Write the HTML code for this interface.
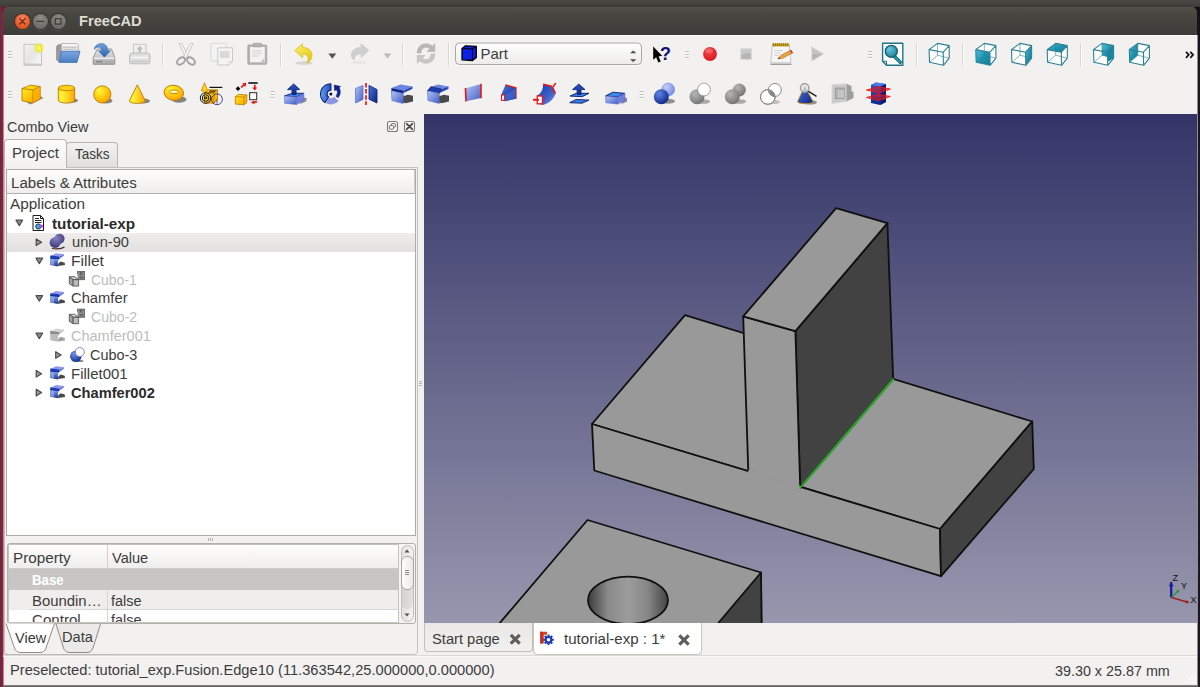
<!DOCTYPE html>
<html>
<head>
<meta charset="utf-8">
<title>FreeCAD</title>
<style>
html,body{margin:0;padding:0;}
body{width:1200px;height:687px;overflow:hidden;position:relative;background:#3c3b37;font-family:"Liberation Sans","DejaVu Sans",sans-serif;font-size:15px;color:#3c3c3c;}
.abs{position:absolute;}
#topband{left:0;top:0;width:1200px;height:8px;background:linear-gradient(#494843 0,#43423d 50%,#383733 100%);}
#leftstrip{left:0;top:7px;width:4px;height:680px;background:linear-gradient(90deg,#5e2a49 0,#6d2f4b 2.200px,#a8182c 2.400px,#a8182c 3.300px,#d8b4ba 3.600px,#e8dcdc 4px);}
#rightstrip{left:1197px;top:7px;width:3px;height:680px;background:linear-gradient(#121212 0,#15141a 30px,#1d1424 60px,#1d1424 100%);}
#titlebar{left:3px;top:7px;width:1194px;height:28px;background:linear-gradient(#55544e 0,#4d4c47 2px,#474641 30%,#3d3c38 100%);border-radius:5px 5px 0 0;}
#title{left:79px;top:12px;font-weight:bold;font-size:15px;color:#dfdbd2;letter-spacing:-0.25px;white-space:nowrap;}
.wbtn{width:15px;height:15px;border-radius:50%;top:14px;box-shadow:0 0 0 1px rgba(45,44,40,.8),0 1px 0 1px rgba(255,255,255,.08);}
#win{left:4px;top:35px;width:1193px;height:650px;background:#f2f1f0;box-shadow:inset 0 1px 0 #fff;}
#viewport{left:424px;top:114px;width:773px;height:509px;background:linear-gradient(#343468 0,#9797ae 100%);overflow:hidden;}
.t{position:absolute;white-space:nowrap;line-height:16px;font-size:14px;transform-origin:0 0;}
</style>
</head>
<body>
<div id="topband" class="abs"></div>
<div id="leftstrip" class="abs"></div>
<div id="rightstrip" class="abs"></div>
<div class="abs" style="left:2px;top:7px;width:7px;height:6px;background:#8a0f14;"></div>
<div class="abs" style="left:1190px;top:7px;width:7px;height:6px;background:#0c0c0c;"></div>
<div id="titlebar" class="abs"></div>
<div class="abs wbtn" style="left:15px;background:radial-gradient(circle at 50% 30%,#f28460,#e8541f 70%);"></div>
<div class="abs wbtn" style="left:33px;background:radial-gradient(circle at 50% 30%,#8c8b85,#6d6c66 70%);"></div>
<div class="abs wbtn" style="left:51px;background:radial-gradient(circle at 50% 30%,#8c8b85,#6d6c66 70%);"></div>
<svg class="abs" style="left:12px;top:11px" width="60" height="21" viewBox="12 11 60 21">
 <path d="M19.800 18.800 L25 24 M25 18.800 L19.800 24" stroke="#5a1f0a" stroke-width="1.300" stroke-linecap="round" opacity=".85"/>
 <path d="M37 21.400 H43.400" stroke="#3a3935" stroke-width="1.300" stroke-linecap="round"/>
 <rect x="55.300" y="18.700" width="5.600" height="5.400" fill="none" stroke="#3a3935" stroke-width="1.200"/>
</svg>
<div id="win" class="abs"></div>
<!--TOOLBARS-->
<svg class="abs" style="left:0;top:35px" width="1200" height="79" viewBox="0 35 1200 79">
<defs>
 <linearGradient id="gPage" x1="0" y1="0" x2="1" y2="1"><stop offset="0" stop-color="#f4f4f4"/><stop offset=".5" stop-color="#e4e4e4"/><stop offset="1" stop-color="#fafafa"/></linearGradient>
 <linearGradient id="gFolder" x1="0" y1="0" x2="0" y2="1"><stop offset="0" stop-color="#7da7df"/><stop offset="1" stop-color="#4a7fc4"/></linearGradient>
 <linearGradient id="gDrive" x1="0" y1="0" x2="0" y2="1"><stop offset="0" stop-color="#e9e9e9"/><stop offset="1" stop-color="#a9a9a9"/></linearGradient>
 <linearGradient id="gArrB" x1="0" y1="0" x2="0" y2="1"><stop offset="0" stop-color="#6ea0dc"/><stop offset="1" stop-color="#2b62ac"/></linearGradient>
 <linearGradient id="gUndo" x1="0" y1="0" x2="1" y2="1"><stop offset="0" stop-color="#f9ef6a"/><stop offset="1" stop-color="#e3c50f"/></linearGradient>
 <radialGradient id="gGlow"><stop offset="0" stop-color="#fffbd0"/><stop offset=".35" stop-color="#f7ee3a"/><stop offset=".8" stop-color="#f2e634" stop-opacity=".75"/><stop offset="1" stop-color="#f2e634" stop-opacity="0"/></radialGradient>
 <radialGradient id="gRed" cx=".4" cy=".3" r=".8"><stop offset="0" stop-color="#f4484c"/><stop offset="1" stop-color="#d8101a"/></radialGradient>
 <linearGradient id="gTeal" x1="0" y1="0" x2="1" y2="1"><stop offset="0" stop-color="#55c2dc"/><stop offset=".5" stop-color="#1f93ae"/><stop offset="1" stop-color="#157c96"/></linearGradient>
 <radialGradient id="gTealB" cx=".35" cy=".3" r=".8"><stop offset="0" stop-color="#6fc6dc"/><stop offset="1" stop-color="#137b94"/></radialGradient>
 <linearGradient id="gCombo" x1="0" y1="0" x2="0" y2="1"><stop offset="0" stop-color="#ffffff"/><stop offset="1" stop-color="#ecebea"/></linearGradient>
 <g id="grip"><path d="M0 .5 H4 M0 3.500 H4 M0 6.500 H4" stroke="#c3c1be" stroke-width="1"/><path d="M0 1.500 H4 M0 4.500 H4 M0 7.500 H4" stroke="#fbfbfa" stroke-width="1"/></g>
 <g id="vsep"><path d="M.5 0 V23" stroke="#d9d7d3"/><path d="M1.500 0 V23" stroke="#fbfbfa"/></g>
 <g id="cubeW">
  <path d="M0.5 6.6 L9 0.4 L20.6 2.6 L20.6 15.2 L14.8 22.3 L0.9 19.3Z" fill="#fff"/>
 </g>
 <g id="cubeL" fill="none" stroke="#2d8093" stroke-linejoin="round">
  <path d="M9 0.4 L9 12.2 M9 12.2 L0.9 19.3 M9 12.2 L20.6 15.2" stroke-width=".8" opacity=".75"/>
  <path d="M0.5 6.6 L9 0.4 L20.6 2.6 L14.6 9.2Z M0.5 6.6 L0.9 19.3 L14.8 22.3 L14.6 9.2 M14.8 22.3 L20.6 15.2 L20.6 2.6" stroke-width="1.100"/>
 </g>
</defs>
<!-- row 1 -->
<use href="#grip" x="8" y="51"/>
<!-- new -->
<path d="M23.500 65 H42" stroke="#b8b8b8" stroke-width="1.200"/>
<rect x="24" y="44.300" width="17.500" height="19.800" fill="url(#gPage)" stroke="#c4c4c4" stroke-width="1"/>
<circle cx="39" cy="48" r="5.200" fill="url(#gGlow)"/>
<!-- open -->
<path d="M56.600 46.500 L58 44.800 H61.500 V61.500 H58.500 L56.600 60Z" fill="#9a9a9a" stroke="#858585" stroke-width=".7"/>
<path d="M61.300 43.600 H77.300 L78.300 44.600 V52 H61.300Z" fill="#e9e9e9" stroke="#a9a9a9" stroke-width=".8"/>
<path d="M62.500 45 H77" stroke="#fff" stroke-width="1.200"/>
<path d="M63 47.200 H76.500 M63 49.300 H76.500" stroke="#bdbdbd" stroke-width="1"/>
<path d="M59.100 62.400 L61.300 51.300 H80 L76.900 62.400Z" fill="url(#gFolder)" stroke="#4676b8" stroke-width=".9" stroke-linejoin="round"/>
<!-- save -->
<path d="M93.200 57.600 L97.300 49 H111.500 L114.800 57.600 V64.300 H93.200Z" fill="url(#gDrive)" stroke="#8d8d8d" stroke-width=".9" stroke-linejoin="round"/>
<path d="M93.800 58.200 H114.300" stroke="#f8f8f8" stroke-width="1.200"/>
<path d="M96 61.600 H102.500" stroke="#808080" stroke-width="1.300"/><path d="M105 61.600 H112.500" stroke="#a5a5a5" stroke-width="1.300" stroke-dasharray="1.300 .9"/>
<path d="M94.300 49.600 C94.300 45.500 98.500 43.200 102 43.500 C106 43.900 107.800 46.800 107.800 50.800 H110.600 L104.400 57.200 L98.300 50.800 H101.600 C101.600 48.500 100.300 47 98.300 47.200 C96.300 47.400 95 48.200 94.300 49.600Z" fill="url(#gArrB)" stroke="#3a6aa8" stroke-width=".5"/>
<!-- print (disabled) -->
<rect x="133.500" y="44.300" width="12.500" height="9" fill="#efefef" stroke="#c2c2c2" stroke-width=".9"/>
<path d="M139.800 46 L142.800 49.300 H141 V52 H138.600 V49.300 H136.800Z" fill="#b9b9b9"/>
<path d="M129.500 56 Q129.500 53 132.500 53 H147 Q150 53 150 56 V62.500 Q150 63.800 148.500 63.800 H131 Q129.500 63.800 129.500 62.500Z" fill="#dedede" stroke="#b7b7b7" stroke-width=".9"/>
<path d="M131.500 57.500 H148" stroke="#f8f8f8" stroke-width="1.500"/>
<path d="M131 61.500 H148.500" stroke="#c6c6c6" stroke-width="1.400"/>
<use href="#vsep" x="162" y="43"/>
<!-- cut (disabled) -->
<path d="M179 43.500 L181.800 43.500 L188.500 57 L186 58.500Z" fill="#f7f7f7" stroke="#bdbdbd" stroke-width=".8"/>
<path d="M193 43.500 L190.200 43.500 L183.500 57 L186 58.500Z" fill="#f7f7f7" stroke="#bdbdbd" stroke-width=".8"/>
<ellipse cx="181" cy="61" rx="4.500" ry="3" transform="rotate(-40 181 61)" fill="none" stroke="#a3a3a3" stroke-width="2"/>
<ellipse cx="191" cy="61" rx="4.500" ry="3" transform="rotate(40 191 61)" fill="none" stroke="#a3a3a3" stroke-width="2"/>
<!-- copy (disabled) -->
<rect x="210.800" y="43.400" width="15.500" height="17.500" rx="1" fill="#f3f3f3" stroke="#d6d6d6" stroke-width=".9"/>
<path d="M217.800 47.800 H232.500 V61.500 L228.800 65 H217.800Z" fill="#f4f4f4" stroke="#c4c4c4" stroke-width=".9" stroke-linejoin="round"/>
<rect x="220" y="51" width="9.500" height="7" fill="#d9d9d9"/>
<path d="M228.800 65 V61.500 H232.500Z" fill="#fff" stroke="#c4c4c4" stroke-width=".7"/>
<!-- paste (disabled) -->
<rect x="247.800" y="45" width="19" height="19.300" rx="1" fill="#b1b1b1" stroke="#a6a6a6" stroke-width=".8"/>
<path d="M250 46.800 H264.800 V62.300 H250Z" fill="#f2f2f2"/>
<path d="M252 51 H262 M252 53.500 H262 M252 56 H259" stroke="#dcdcdc" stroke-width="1.300"/>
<path d="M260.800 61.800 L264.300 58.300 V61.800Z" fill="#bdbdbd"/>
<rect x="253" y="43.300" width="8.600" height="3.600" rx="1" fill="#b3b3b3" stroke="#999" stroke-width=".6"/>
<use href="#vsep" x="280" y="43"/>
<!-- undo -->
<ellipse cx="304" cy="63" rx="8.500" ry="1.800" fill="#000" opacity=".12"/>
<path d="M294.800 50.500 L302.500 43.800 V47.600 C309 47.400 312.300 51.500 312 56 C311.700 59.800 309.500 62 306.500 63 C308.500 60.500 308.800 57.500 307 55.600 C305.800 54.300 304.200 54 302.500 54.100 V57.800Z" fill="url(#gUndo)" stroke="#d9b90a" stroke-width=".7" stroke-linejoin="round"/>
<path d="M328.300 53.500 H336.300 L332.300 58.700Z" fill="#555"/>
<!-- redo disabled -->
<ellipse cx="359" cy="62.500" rx="8" ry="1.500" fill="#000" opacity=".05"/>
<path d="M368.700 50.300 L361.200 43.800 V47.500 C355 47.300 351.300 51 351.500 55.500 C351.700 58.300 353 59.500 354.500 60 C354 57.500 355.500 55.300 357.500 54.500 C358.700 54 360 54 361.200 54.100 V57.500Z" fill="#cfcfcf" stroke="#c5c5c5" stroke-width=".6" stroke-linejoin="round"/>
<path d="M383.700 53.500 H391.300 L387.500 58.500Z" fill="#b9b9b9"/>
<use href="#vsep" x="402" y="43"/>
<!-- refresh disabled -->
<path d="M417.300 53 C417.300 47 421.500 43.800 426 43.800 C428.800 43.800 430.800 44.800 432.300 46.300 L434.800 43.800 V51.500 H427 L429.800 48.800 C428.800 47.800 427.500 47.300 426 47.300 C423 47.300 421 49.800 421 53Z" fill="#b9b9b9" stroke="#a8a8a8" stroke-width=".5"/>
<path d="M434.800 54 C434.800 60 430.500 63.200 426 63.200 C423.200 63.200 421.200 62.200 419.700 60.700 L417.300 63.200 V55.500 H425 L422.300 58.200 C423.300 59.200 424.500 59.700 426 59.700 C429 59.700 431 57.200 431 54Z" fill="#c6c6c6" stroke="#b0b0b0" stroke-width=".5"/>
<use href="#vsep" x="448" y="43"/>
<!-- combo -->
<rect x="455.500" y="43" width="186" height="21.500" rx="4" fill="url(#gCombo)" stroke="#aaa7a2" stroke-width="1"/>
<path d="M455.500 65.500 H641" stroke="#fff" stroke-width="1" opacity=".7"/>
<path d="M462 48.500 L465.500 45.800 L476.300 46.300 L476.300 57.500 L472.500 60.500 L462 59.800Z" fill="#0b22e6" stroke="#000" stroke-width="1.300" stroke-linejoin="round"/>
<path d="M462 48.500 L472.500 49 L476.300 46.300 M472.500 49 V60.500" fill="none" stroke="#000" stroke-width="1.100"/>
<text x="480.500" y="59.300" font-family="Liberation Sans, sans-serif" font-size="15" fill="#3c3c3c">Part</text>
<path d="M630 53.300 L633.200 50.500 L636.400 53.300Z M630 59.300 L633.200 62 L636.400 59.300Z" fill="#4d4d4d"/>
<!-- whats this -->
<path d="M653.200 46.500 L653.200 59.800 L656.200 57.300 L658.300 62.500 L660.800 61.500 L658.600 56.300 L662.300 56Z" fill="#000"/>
<text x="660" y="59.500" font-family="Liberation Sans, sans-serif" font-weight="bold" font-size="18" fill="#10107c">?</text>
<use href="#grip" x="685" y="51"/>
<!-- record -->
<circle cx="710" cy="54" r="6.900" fill="url(#gRed)"/>
<ellipse cx="709" cy="50.800" rx="4" ry="2.300" fill="#fff" opacity=".18"/>
<!-- stop disabled -->
<rect x="740.800" y="48.800" width="10.500" height="10.500" fill="#c9c9c9" stroke="#d6d6d6" stroke-width=".8"/>
<path d="M741.500 55 Q746 52.500 750.700 53 V58.800 H741.500Z" fill="#b5b5b5"/>
<!-- macros notepad -->
<path d="M770.500 64.300 H791.500" stroke="#9c9c9c" stroke-width="1.400"/>
<path d="M772.300 45.500 H789.300 L791 62.800 H770.800Z" fill="#f6f6f6" stroke="#b9b9b9" stroke-width=".8"/>
<path d="M774 50.500 H783 M774 53 H781 M774 55.500 H779" stroke="#d0d0d0" stroke-width=".9"/>
<rect x="772.300" y="43.300" width="17" height="3.200" fill="#c9a227"/>
<path d="M773.500 43.300 V46 M775.500 43.300 V46 M777.500 43.300 V46 M779.500 43.300 V46 M781.500 43.300 V46 M783.500 43.300 V46 M785.500 43.300 V46 M787.500 43.300 V46" stroke="#8d6f10" stroke-width=".8"/>
<path d="M777.800 58.800 L781 55.300 L791 50 L792.800 52.800 L782.500 58.300Z" fill="#e8a33a" stroke="#a8691c" stroke-width=".6"/>
<path d="M790 50.500 L791 50 L792.800 52.800 L791.800 53.400Z" fill="#e0202a"/>
<path d="M777.800 58.800 L779.300 57.200 L780 58.500Z" fill="#222"/>
<!-- play disabled -->
<path d="M811.800 47 L823.500 54 L811.800 61Z" fill="#c4c4c4" stroke="#d4d4d4" stroke-width=".8" stroke-linejoin="round"/>
<path d="M812.500 54 L822.500 54 L812.500 60Z" fill="#b5b5b5"/>
<use href="#grip" x="868" y="51"/>
<!-- zoom fit -->
<path d="M882.600 43.300 H902.800 V65.200 H886.500 L882.600 61.200Z" fill="#fff" stroke="#1f7485" stroke-width="1.400" stroke-linejoin="round"/>
<path d="M882.600 61.200 H886.500 V65.200" fill="none" stroke="#1f7485" stroke-width="1"/>
<path d="M894.500 56.500 L900.300 62.300" stroke="#0f6075" stroke-width="3.400" stroke-linecap="round"/>
<path d="M894.500 56.500 L900.300 62.300" stroke="#2ca0ba" stroke-width="1.600" stroke-linecap="round"/>
<circle cx="891.300" cy="51.300" r="6" fill="url(#gTealB)" stroke="#0f6075" stroke-width="1.300"/>
<use href="#vsep" x="916" y="43"/>
<!-- iso -->
<g transform="translate(928.600 43)"><use href="#cubeW"/><use href="#cubeL"/></g>
<use href="#vsep" x="962" y="43"/>
<!-- front -->
<g transform="translate(975.300 43)"><use href="#cubeW"/><path d="M0.5 6.6 L14.6 9.2 L14.8 22.3 L0.9 19.3Z" fill="url(#gTeal)"/><use href="#cubeL"/></g>
<!-- right -->
<g transform="translate(1011 43)"><use href="#cubeW"/><path d="M14.6 9.2 L20.6 2.6 L20.6 15.2 L14.8 22.3Z" fill="url(#gTeal)"/><use href="#cubeL"/></g>
<!-- top -->
<g transform="translate(1046.700 43)"><use href="#cubeW"/><path d="M0.5 6.6 L9 0.4 L20.6 2.6 L14.6 9.2Z" fill="url(#gTeal)"/><use href="#cubeL"/></g>
<use href="#vsep" x="1080" y="43"/>
<!-- rear -->
<g transform="translate(1093 43)"><use href="#cubeW"/><path d="M9 0.4 L20.6 2.6 L20.6 15.2 L9 12.2Z" fill="url(#gTeal)"/><path d="M14.6 9.2 L20.6 2.6 L20.6 15.2 L14.6 19Z" fill="#1a87a2"/><use href="#cubeL"/></g>
<!-- left -->
<g transform="translate(1128.800 43)"><use href="#cubeW"/><path d="M0.5 6.6 L9 0.4 L9 12.2 L0.9 19.3Z" fill="url(#gTeal)"/><use href="#cubeL"/></g>
<!-- chevrons -->
<path d="M1186 51.800 L1188.800 54.800 L1186 57.800 M1190.300 51.800 L1193.100 54.800 L1190.300 57.800" fill="none" stroke="#111" stroke-width="1.700"/>
<defs>
 <linearGradient id="gY" x1="0" y1="0" x2="1" y2="1"><stop offset="0" stop-color="#fff02a"/><stop offset=".5" stop-color="#ffc60a"/><stop offset="1" stop-color="#ffa200"/></linearGradient>
 <linearGradient id="gYh" x1="0" y1="0" x2="1" y2="0"><stop offset="0" stop-color="#ffe81e"/><stop offset=".25" stop-color="#fff23a"/><stop offset="1" stop-color="#ffa400"/></linearGradient>
 <radialGradient id="gYs" cx=".35" cy=".3" r=".75"><stop offset="0" stop-color="#fff63a"/><stop offset=".6" stop-color="#ffc40a"/><stop offset="1" stop-color="#ffa000"/></radialGradient>
 <linearGradient id="gB1" x1="0" y1="0" x2="1" y2="1"><stop offset="0" stop-color="#b7c6f4"/><stop offset="1" stop-color="#3f5fc8"/></linearGradient>
 <linearGradient id="gB2" x1="0" y1="0" x2="1" y2="1"><stop offset="0" stop-color="#4f74da"/><stop offset="1" stop-color="#0a2385"/></linearGradient>
 <linearGradient id="gB3" x1="0" y1="0" x2="0" y2="1"><stop offset="0" stop-color="#2f57c8"/><stop offset="1" stop-color="#0b2a8e"/></linearGradient>
 <linearGradient id="gRev" x1="0" y1="0" x2="1" y2="0"><stop offset="0" stop-color="#62a0f2"/><stop offset="1" stop-color="#2348c0"/></linearGradient>
 <linearGradient id="gSw" x1="0" y1="0" x2="1" y2="1"><stop offset="0" stop-color="#1a3aa8"/><stop offset=".6" stop-color="#3a62cc"/><stop offset="1" stop-color="#7aa0ec"/></linearGradient>
 <radialGradient id="gBs" cx=".35" cy=".3" r=".8"><stop offset="0" stop-color="#5f86ea"/><stop offset="1" stop-color="#061f80"/></radialGradient>
 <radialGradient id="gBsL" cx=".35" cy=".3" r=".8"><stop offset="0" stop-color="#c3cdf6"/><stop offset="1" stop-color="#6f86e0"/></radialGradient>
 <radialGradient id="gGs" cx=".35" cy=".3" r=".8"><stop offset="0" stop-color="#b5b5b5"/><stop offset="1" stop-color="#6e6e6e"/></radialGradient>
 <g id="filletBig">
  <path d="M8 16 L14.500 19 L22 17.500 V12.800 L14 11.500Z" fill="#4a4a4a"/>
  <path d="M.5 5.500 L9 .8 L21.500 2.500 L12.500 7Z" fill="#6f88e2"/>
 </g>
</defs>
<use href="#grip" x="8" y="91"/>
<!-- box -->
<path d="M26 101.500 L38 95 L43.500 98 L30 104.500Z" fill="#000" opacity=".45"/>
<path d="M22 88.500 L30.500 85.200 L40.200 86.500 L40.200 98.800 L33 103 L22 100.800Z" fill="url(#gY)" stroke="#b87a00" stroke-width=".9" stroke-linejoin="round"/>
<path d="M22 88.500 L33 90 L40.200 86.500 M33 90 V103" fill="none" stroke="#b87a00" stroke-width=".9"/>
<path d="M33.400 90.300 L39.800 87.200 V98.600 L33.400 102.400Z" fill="#ffa600" opacity=".6"/>
<!-- cylinder -->
<ellipse cx="70.500" cy="100.500" rx="7.500" ry="2.600" fill="#000" opacity=".45"/>
<path d="M58.300 88 V100.300 A8.200 2.800 0 0 0 74.700 100.300 V88Z" fill="url(#gYh)" stroke="#b87a00" stroke-width=".9"/>
<ellipse cx="66.500" cy="88" rx="8.200" ry="2.700" fill="#ffd21a" stroke="#b87a00" stroke-width=".9"/>
<!-- sphere -->
<ellipse cx="106" cy="100.800" rx="6.500" ry="2.600" fill="#000" opacity=".45"/>
<circle cx="102.300" cy="94.400" r="8.600" fill="url(#gYs)" stroke="#b87a00" stroke-width=".9"/>
<!-- cone -->
<ellipse cx="143" cy="101" rx="7" ry="2.500" fill="#000" opacity=".45"/>
<path d="M137.300 84.800 L129.300 100.800 A8 2.600 0 0 0 145.300 100.800Z" fill="url(#gYh)" stroke="#b87a00" stroke-width=".9" stroke-linejoin="round"/>
<!-- torus -->
<ellipse cx="179" cy="99.500" rx="7.500" ry="3.200" fill="#000" opacity=".45"/>
<ellipse cx="173.800" cy="92.800" rx="9.800" ry="7.600" transform="rotate(8 173.800 92.800)" fill="url(#gYs)" stroke="#b87a00" stroke-width=".9"/>
<ellipse cx="174" cy="91.800" rx="4.600" ry="1.900" fill="#fff6b0" stroke="#b87a00" stroke-width=".9"/>
<!-- primitives -->
<path d="M204.500 103 V93.500 L208 89.800 H217.500 V99.500 L214 103.200Z" fill="url(#gY)" stroke="#b87a00" stroke-width=".8"/>
<path d="M204.500 93.500 H214 L217.500 89.800 M214 93.500 V103" fill="none" stroke="#b87a00" stroke-width=".8"/>
<path d="M210 90.300 H216.500 L214 92.800 H208Z" fill="#7a4a00"/>
<path d="M204.500 82.800 L201.300 90.800 Q204.500 92 207.800 90.800Z" fill="#ffd414" stroke="#b87a00" stroke-width=".7"/>
<path d="M209.500 87.400 H222.300" stroke="#111" stroke-width="1.200"/>
<circle cx="205.600" cy="98" r="5.300" fill="none" stroke="#111" stroke-width="1"/>
<circle cx="205.600" cy="98" r="3.300" fill="none" stroke="#111" stroke-width="1"/>
<path d="M204.300 98.600 H206.800 V97 H204.300Z" fill="none" stroke="#111" stroke-width=".9"/>
<circle cx="217" cy="99.300" r="5.400" fill="none" stroke="#34347e" stroke-width=".9"/>
<path d="M217 99.300 V103.500" stroke="#2a2a80" stroke-width=".8"/>
<!-- shape builder -->
<path d="M238 86.300 L240.300 88.700 L238 91.100 L235.700 88.700Z" fill="#000"/>
<path d="M240.500 86.800 L243.300 84.500 L242.300 83.300 L246.300 82.800 L245.600 86.800 L244.500 85.700 L241.700 88Z" fill="#e01818"/>
<path d="M248.300 83 H257.700" stroke="#111" stroke-width="1.600"/>
<path d="M254 84.800 H255.600 V87.500 H257.300 L254.800 90.500 L252.300 87.500 H254Z" fill="#e01818"/>
<rect x="249.700" y="92.700" width="7" height="7" fill="#fff" stroke="#2a2a2a" stroke-width="1"/>
<path d="M257 101 L253.500 101.300 L254 100.200 L250.800 102.700 L254.800 104.300 L254.400 103.100 L257.400 102.600Z" fill="#e01818"/>
<path d="M235.300 96.600 L238.500 94.400 L246.800 94.900 V102.600 L244 104.800 L235.300 104.100Z" fill="url(#gY)" stroke="#b87a00" stroke-width=".8" stroke-linejoin="round"/>
<path d="M235.300 96.600 L244 97.200 L246.800 94.900 M244 97.200 V104.800" fill="none" stroke="#b87a00" stroke-width=".8"/>
<use href="#grip" x="270.500" y="91"/>
<!-- extrude -->
<path d="M303.800 97.500 L306.800 98.300 L306.300 101.300 L300 104.300Z" fill="#000" opacity=".4"/>
<path d="M284.500 95.900 L292.500 93.200 L303.850 93.300 L296.300 96.900Z" fill="#3f86e6" stroke="#0c1c70" stroke-width=".9" stroke-linejoin="round"/>
<path d="M284.500 95.900 L296.300 96.900 V104.500 L284.700 103.200Z" fill="url(#gB1)" stroke="#5a68c8" stroke-width=".6" stroke-linejoin="round"/>
<path d="M296.300 96.900 L303.850 93.450 V100.800 L296.300 104.500Z" fill="#6f80da" stroke="#5a68c8" stroke-width=".6" stroke-linejoin="round"/>
<path d="M293.660 83.900 L299.800 89.600 H296.100 V94.300 Q294 95.100 292 94.300 V89.600 H287.500Z" fill="url(#gB3)" stroke="#0a1a6a" stroke-width=".8" stroke-linejoin="round"/>
<!-- revolve -->
<path d="M330.900 83.700 A10.400 10.400 0 0 0 324.900 102.600 L328.700 97.200 A3.800 3.800 0 0 1 330.900 90.260 Z" fill="url(#gRev)" stroke="#0c1c66" stroke-width="1.100" stroke-linejoin="round"/>
<path d="M325.700 103.070 A10.400 10.400 0 0 0 338.600 101 L334 96.870 A4.200 4.200 0 0 1 328.800 97.700Z" fill="#8a96e2"/>
<circle cx="330.900" cy="94.060" r="1.500" fill="#0a0a50"/>
<path d="M334.200 85 L340.600 86.500 L339.300 87.800 Q341.800 93 338.200 97.700 L336 96.300 Q338.300 92.800 337 90 L334.500 90.400Z" fill="#0d2394" stroke="#08145e" stroke-width=".5" stroke-linejoin="round"/>
<!-- mirror -->
<path d="M355.500 88.500 L363 85.400 V99.500 L355.500 103Z" fill="url(#gB1)" stroke="#5a6cc8" stroke-width=".7"/>
<path d="M369 85.400 L377 89.500 V103 L369 99.300Z" fill="url(#gB2)" stroke="#0c2070" stroke-width=".8"/>
<path d="M366 83 V105" stroke="#f01414" stroke-width="1.700" stroke-dasharray="4.500 1.600"/>
<!-- fillet -->
<g transform="translate(391 84)">
 <path d="M12 12.300 L17 10.800 L22 11.800 V17.600 L14.500 19.200 L12 18.200Z" fill="#4a4a4a"/>
 <path d="M.4 4 L9.500 .6 L21.500 2.600 L12.300 6.600Z" fill="#6a84e0"/>
 <path d="M12.300 6.600 L21.500 2.600 V4.800 Q18 7 15 7.800 L12.300 9.300Z" fill="#2a49b4"/>
 <path d="M.4 4 L12.300 6.600 V9.500 L.4 6.800Z" fill="#0b2688"/>
 <path d="M.4 6.800 L12.300 9.500 V19.500 L.9 16.600Z" fill="url(#gB1)" stroke="#4a5ec0" stroke-width=".5"/>
</g>
<!-- chamfer -->
<g transform="translate(427 84)">
 <path d="M12 12.300 L17 10.800 L22 11.800 V17.600 L14.500 19.200 L12 18.200Z" fill="#4a4a4a"/>
 <path d="M3.800 2.800 L11 .6 L21.500 2.600 L14.500 5Z" fill="#6a84e0"/>
 <path d="M14.500 5 L21.500 2.600 V4.800 Q18 7 15 7.800 L12.300 9.300Z" fill="#2a49b4"/>
 <path d="M3.800 2.800 L14.500 5 L12.300 9.300 L.4 6.800Z" fill="#1d3fae" stroke="#0a1c6a" stroke-width=".7" stroke-linejoin="round"/>
 <path d="M.4 6.800 L12.300 9.300 V19.500 L.9 16.600Z" fill="url(#gB1)" stroke="#4a5ec0" stroke-width=".5"/>
</g>
<!-- ruled surface -->
<path d="M465.500 88.200 L481 84 V98 L466 101.300Z" fill="url(#gB1)"/>
<path d="M465.500 88 L466 101.500 M481 83.800 V98.200" stroke="#f01414" stroke-width="1.600"/>
<!-- loft -->
<path d="M505.500 84.800 L516 87.800 V98.800 L505 101.300 L501.300 100.300 V94.800Z" fill="url(#gB2)"/>
<path d="M505.500 84.800 L516 87.800 V98.800" fill="none" stroke="#f01414" stroke-width="1.200"/>
<rect x="501.600" y="95" width="3" height="5.300" fill="#fff" stroke="#f01414" stroke-width="1.100"/>
<path d="M505 95 L515.500 88.300 V98.500 L505 100.800Z" fill="#3f66d4" opacity=".8"/>
<!-- sweep -->
<path d="M543.200 84.200 L551.700 86.200 Q556.500 90 555.300 94.500 Q552 102.500 543.200 105 L537 103.500 V95.500 Q543 93 543.200 84.200Z" fill="url(#gSw)"/>
<path d="M543.200 84.200 L551.700 86.300" stroke="#f01414" stroke-width="1.500"/>
<path d="M555.800 83 L552.200 88 L555.500 93.600" fill="none" stroke="#f01414" stroke-width="1.500"/>
<path d="M543 101 Q549.500 99 552.500 91" fill="none" stroke="#c03060" stroke-width=".9" stroke-dasharray="2 1.200" opacity=".8"/>
<rect x="537.200" y="96" width="5.200" height="7.800" fill="#fff" stroke="#f01414" stroke-width="1.300"/>
<path d="M533 99.800 H539" stroke="#f01414" stroke-width="2"/>
<!-- offset -->
<path d="M569.700 102.700 L576.200 99.500 L589 100.100 L582.100 103.200Z" fill="#3a80e2" stroke="#0a1a6a" stroke-width=".9" stroke-linejoin="round"/>
<path d="M570 96.100 L576.200 93.300 L589 93.300 L582.100 96.700Z" fill="#3a80e2" stroke="#0a1a6a" stroke-width=".9" stroke-linejoin="round"/>
<path d="M578.800 84 L585 89.600 H581 V94.200 Q579 95 577.100 94.200 V89.600 H572.500Z" fill="url(#gB3)" stroke="#0a1a6a" stroke-width=".8" stroke-linejoin="round"/>
<!-- thickness -->
<path d="M624.800 97.500 L627 98.200 V101.500 L621 104.200Z" fill="#000" opacity=".45"/>
<path d="M605.600 95.900 L612.700 92.200 L624.900 93.300 L617.500 97Z" fill="#3f86e6" stroke="#0c1c70" stroke-width=".9" stroke-linejoin="round"/>
<path d="M605.600 96.100 L617.500 97.300 V104.100 L605.900 102.700Z" fill="url(#gB1)" stroke="#5a68c8" stroke-width=".6" stroke-linejoin="round"/>
<path d="M617.500 97.300 L624.900 93.600 V100.700 L617.500 104.100Z" fill="#6f80da" stroke="#5a68c8" stroke-width=".6" stroke-linejoin="round"/>
<use href="#grip" x="639.500" y="91"/>
<!-- boolean -->
<ellipse cx="668" cy="101.300" rx="7" ry="2.500" fill="#000" opacity=".4"/>
<circle cx="668.200" cy="89.500" r="6.500" fill="url(#gBsL)" stroke="#6a7fd8" stroke-width=".5"/>
<circle cx="661.300" cy="96.800" r="7.500" fill="url(#gBs)"/>
<!-- cut -->
<ellipse cx="703" cy="101.500" rx="7" ry="2.300" fill="#000" opacity=".3"/>
<circle cx="697" cy="96.800" r="7.500" fill="url(#gGs)"/>
<circle cx="704" cy="89.500" r="6.400" fill="#fff" stroke="#9a9a9a" stroke-width=".9"/>
<!-- fuse -->
<ellipse cx="739" cy="101.500" rx="7" ry="2.300" fill="#000" opacity=".3"/>
<circle cx="739.300" cy="90" r="6.500" fill="url(#gGs)"/>
<circle cx="732.300" cy="96.800" r="7.500" fill="url(#gGs)"/>
<!-- common -->
<ellipse cx="774" cy="102" rx="6" ry="2" fill="#000" opacity=".2"/>
<circle cx="767.800" cy="97" r="7.300" fill="#fff" stroke="#8a8a8a" stroke-width="1"/>
<circle cx="774.800" cy="90" r="6.500" fill="#fff" stroke="#8a8a8a" stroke-width="1"/>
<path d="M769.500 90.300 A6.500 6.500 0 0 0 774.800 96.500 A7.300 7.300 0 0 0 769.500 90.300Z" fill="#8c8c8c" stroke="#6e6e6e" stroke-width=".8"/>
<circle cx="767.800" cy="97" r="7.300" fill="none" stroke="#8a8a8a" stroke-width="1"/>
<!-- check geometry -->
<ellipse cx="810" cy="102.300" rx="7" ry="2.300" fill="#000" opacity=".4"/>
<path d="M804.800 86 L797.500 101.500 A7.800 2.500 0 0 0 813 101.500Z" fill="url(#gB2)" stroke="#c89a14" stroke-width=".9" stroke-linejoin="round"/>
<path d="M807.800 90.800 L816.500 96.300" stroke="#222" stroke-width="1.400"/>
<circle cx="804.700" cy="88" r="4.300" fill="#dfe3ee" fill-opacity=".75" stroke="#9a9a9a" stroke-width="1.300"/>
<!-- cross sections (disabled) -->
<path d="M832 84.500 L846.500 83.700 V101.500 L832 103.500Z" fill="#c9c9c9" stroke="#dadada" stroke-width=".8"/>
<path d="M846.500 83.700 L851.500 86 V91.500 H853.500 V98 L846.500 101.500Z" fill="#9e9e9e"/>
<rect x="835.300" y="88" width="9" height="10.500" fill="#b0b0b0" stroke="#8f8f8f" stroke-width=".7"/>
<rect x="837.500" y="90" width="6.800" height="8" fill="#c4c4c4"/>
<!-- section stack -->
<path d="M871 85 L876 82.500 L886 84 V102 L880 105 L871 103Z" fill="url(#gB3)"/>
<path d="M871 85 L876 82.500 L886 84 L880.500 86.500Z" fill="#4f7be0"/>
<path d="M880.500 86.500 L886 84 V102 L880.500 105Z" fill="#091f78"/>
<path d="M866.500 90 L878 86.800 L890.300 89 L878.800 93Z" fill="#f01414" fill-opacity=".55" stroke="#f01414" stroke-width=".9"/>
<path d="M866.500 97.500 L878 94.300 L890.300 96.500 L878.800 100.500Z" fill="#f01414" fill-opacity=".55" stroke="#f01414" stroke-width=".9"/>

</svg>
<!--/TOOLBARS-->
<!--LEFTPANEL-->
<style>
#combolabel{left:6px;top:117px;}
.tab{position:absolute;box-sizing:border-box;border:1px solid #b9b5af;border-bottom:none;border-radius:4px 4px 0 0;}
#treeframe{left:6px;top:169px;width:410px;height:367px;box-sizing:border-box;border:1px solid #aeaaa4;background:#fff;}
#treehead{left:7px;top:170px;width:408px;height:24px;box-sizing:border-box;border-bottom:1px solid #b4b0aa;background:linear-gradient(#fdfdfc,#efeeec);border-right:1px solid #cfccc8;}
#selrow{left:7px;top:233px;width:408px;height:19px;background:linear-gradient(#eeedec,#e2e1df);}
.gray{color:#bdbdbd;}
.b{font-weight:bold;color:#2b2b2b;}
#propouter{left:7px;top:543px;width:409px;height:81px;box-sizing:border-box;border:1px solid #b3afa9;border-radius:3px;background:#f5f4f3;}
#propframe{left:9px;top:545px;width:389px;height:77px;background:#fff;overflow:hidden;}
</style>
<!-- float / close buttons -->
<svg class="abs" style="left:386px;top:120px" width="30" height="13" viewBox="0 0 30 13">
 <rect x="1.5" y="1.5" width="10" height="10" rx="2" fill="#f7f6f5" stroke="#7d7b78" stroke-width="1.1"/>
 <rect x="5.2" y="3.6" width="4.2" height="3.6" rx="1" fill="none" stroke="#6b6966" stroke-width="1"/>
 <rect x="3.4" y="5.6" width="4.2" height="3.6" rx="1" fill="#f7f6f5" stroke="#6b6966" stroke-width="1"/>
 <rect x="18.5" y="1.5" width="10" height="10" rx="2" fill="#f7f6f5" stroke="#7d7b78" stroke-width="1.1"/>
 <path d="M20.8 3.8 L26.2 9.2 M26.2 3.8 L20.8 9.2" stroke="#4e4c49" stroke-width="1.9" stroke-linecap="round"/>
</svg>
<!-- tabs -->
<div class="tab" style="left:4px;top:139px;width:63px;height:29px;background:linear-gradient(#fbfbfa,#f2f1f0);z-index:2;"></div>
<div class="tab" style="left:66px;top:142px;width:52px;height:26px;background:linear-gradient(#f3f2f1,#dfdedc);"></div>
<div class="abs" style="left:4px;top:167px;width:414px;height:488px;box-sizing:border-box;border:1px solid #c4c1bc;border-radius:0 0 4px 4px;"></div>
<div id="treeframe" class="abs"></div>
<div id="treehead" class="abs"></div>
<div id="selrow" class="abs"></div>
<svg width="0" height="0" style="position:absolute">
 <defs>
  <linearGradient id="gBlue" x1="0" y1="0" x2="1" y2="1"><stop offset="0" stop-color="#9fb6ee"/><stop offset="1" stop-color="#1f3fa8"/></linearGradient>
  <linearGradient id="gBlueV" x1="0" y1="0" x2="0" y2="1"><stop offset="0" stop-color="#7f9be6"/><stop offset="1" stop-color="#1a3596"/></linearGradient>
  <linearGradient id="gGrayI" x1="0" y1="0" x2="1" y2="1"><stop offset="0" stop-color="#d4d4d4"/><stop offset="1" stop-color="#9a9a9a"/></linearGradient>
  <radialGradient id="gPurp" cx="0.4" cy="0.3" r="0.8"><stop offset="0" stop-color="#8a86c0"/><stop offset="1" stop-color="#2f2c6e"/></radialGradient>
  <radialGradient id="gBall" cx="0.35" cy="0.3" r="0.8"><stop offset="0" stop-color="#6f8fe8"/><stop offset="1" stop-color="#0b2a8c"/></radialGradient>
  <g id="arrD"><path d="M0.5 0.7 L7.1 0.7 L3.8 6.1Z" fill="#8e8e8e" stroke="#4c4c4c" stroke-width="1.2" stroke-linejoin="round"/></g>
  <g id="arrR"><path d="M0.7 0.5 L0.7 7.1 L6.1 3.8Z" fill="#9a9a9a" stroke="#4c4c4c" stroke-width="1.2" stroke-linejoin="round"/></g>
  <g id="icFillet">
   <path d="M8.500 13.600 L15.500 12.600 L15.200 10.200 L11.200 9 L8.800 11Z" fill="#484848"/>
   <path d="M1.500 3.200 L6.500 .8 L14.800 1.800 L9.500 4.200Z" fill="#8f98ea"/>
   <path d="M9.500 4.200 L14.800 1.800 L14 3.500 Q11.500 5 9.600 6.800Z" fill="#5a6cd2"/>
   <path d="M.9 3 L9.500 4.100 L9.600 6.900 L.6 6.200Z" fill="#0b2aa2"/>
   <path d="M2 3.800 L8.500 4.600 L8.500 5.400 L1.800 4.700Z" fill="#2f5fd8" opacity=".8"/>
   <path d="M.6 6.200 L9 6.800 Q8.200 10 8.600 13.900 L.8 12.400Z" fill="url(#gBlueV)"/>
   <path d="M1 6.600 L4.600 6.900 L4.600 12.800 L1.100 12.100Z" fill="#a9bcf4" opacity=".6"/>
  </g>
  <g id="icFilletG">
   <path d="M8.500 13.600 L15.500 12.600 L15.200 10.200 L11.200 9 L8.800 11Z" fill="#a2a2a2"/>
   <path d="M1.500 3.200 L6.500 .8 L14.800 1.800 L9.500 4.200Z" fill="#d6d6d6"/>
   <path d="M9.500 4.200 L14.800 1.800 L14 3.500 Q11.500 5 9.600 6.800Z" fill="#bdbdbd"/>
   <path d="M.9 3 L9.500 4.100 L9.600 6.900 L.6 6.200Z" fill="#8c8c8c"/>
   <path d="M.6 6.200 L9 6.800 Q8.200 10 8.600 13.900 L.8 12.400Z" fill="#bcbcbc"/>
  </g>
  <g id="icCubo">
   <rect x="8.600" y=".5" width="7" height="8.200" fill="#8e8e8e" stroke="#5c5c5c" stroke-width=".8"/>
   <rect x="10.800" y="1" width="3.200" height="2.700" fill="#555"/><rect x="12.600" y="1.300" width=".9" height="2" fill="#aaa"/>
   <rect x="10.500" y="5.300" width="3.800" height="2.400" fill="#6a6a6a"/>
   <path d="M4.800 5.500 L8.600 3 V8.700 L5.500 8.600Z" fill="#fff"/>
   <path d="M.3 5.800 L5.500 5.600 L9.600 8.700 L4.100 8.700Z" fill="#cfcfcf" stroke="#4a4a4a" stroke-width=".8" stroke-linejoin="round"/>
   <path d="M.3 5.800 L4.100 8.700 V15.100 L.3 12.800Z" fill="#a2a2a2" stroke="#4a4a4a" stroke-width=".8" stroke-linejoin="round"/>
   <path d="M4.100 8.700 H9.600 V15.100 H4.100Z" fill="#b9b9b9" stroke="#4a4a4a" stroke-width=".8" stroke-linejoin="round"/>
  </g>
 </defs>
</svg>
<svg class="abs" style="left:6px;top:212px" width="100" height="190" viewBox="6 212 100 190">
 <use href="#arrD" x="15.5" y="219.5"/>
 <!-- document icon -->
 <path d="M33 215.5 H40.5 L43.5 218.5 V230.5 H33Z" fill="#fff" stroke="#1a1a1a" stroke-width="1"/>
 <path d="M40.5 215.5 V218.5 H43.5" fill="none" stroke="#1a1a1a" stroke-width="1"/>
 <path d="M35 218.5 H39 M35 220.5 H41.5 M35 222.5 H41.5" stroke="#222" stroke-width="1"/>
 <circle cx="38.3" cy="226.5" r="2.6" fill="#2bb8c6" stroke="#0a2a66" stroke-width="0.9"/>
 <rect x="39.5" y="224.8" width="3.3" height="2.8" fill="#d63ad6"/>
 <!-- union-90 -->
 <use href="#arrR" x="35.5" y="238.5"/>
 <path d="M52 248.5 Q61 249.5 64.5 247" stroke="#4a2a2a" stroke-width="1.2" fill="none"/>
 <path d="M49.700 243.200 C49.500 239.600 52.300 237.600 54.800 237 C55.300 234.600 58.300 233.400 60.800 233.900 C64 234.500 65.300 237.800 64.200 240.500 C63.300 242.700 61.800 243.500 60.300 243.900 C59.300 247 56.500 248.300 54 247.800 C51.500 247.300 49.900 245.500 49.700 243.200Z" fill="url(#gPurp)"/>
 <!-- Fillet -->
 <use href="#arrD" x="35.5" y="257.5"/>
 <use href="#icFillet" x="49.5" y="252.5"/>
 <use href="#icCubo" x="69" y="271"/>
 <!-- Chamfer -->
 <use href="#arrD" x="35.500" y="295"/>
 <use href="#icFillet" x="49.5" y="290.2"/>
 <use href="#icCubo" x="69" y="308.600"/>
 <!-- Chamfer001 -->
 <use href="#arrD" x="35.5" y="332.500"/>
 <use href="#icFilletG" x="49.5" y="327.800"/>
 <!-- Cubo-3 -->
 <use href="#arrR" x="55" y="351.200"/>
 <ellipse cx="80" cy="361" rx="3.5" ry="1" fill="#333" opacity=".6"/>
 <circle cx="75.8" cy="356.3" r="5.8" fill="url(#gBall)"/>
 <circle cx="79.8" cy="352" r="4.5" fill="#fff" stroke="#8a8ac0" stroke-width="1"/>
 <!-- Fillet001 -->
 <use href="#arrR" x="35.5" y="370"/>
 <use href="#icFillet" x="49.5" y="365.500"/>
 <!-- Chamfer002 -->
 <use href="#arrR" x="35.5" y="388.800"/>
 <use href="#icFillet" x="49.5" y="384.300"/>
</svg>

<!-- splitter grips -->
<div class="abs" style="left:208px;top:538px;width:1px;height:3px;background:#b5b2ae;box-shadow:2px 0 #b5b2ae,4px 0 #b5b2ae;"></div>
<div class="abs" style="left:419px;top:381px;width:3px;height:1px;background:#b5b2ae;box-shadow:0 2px #b5b2ae,0 4px #b5b2ae;"></div>
<!-- property editor -->
<div id="propouter" class="abs"></div>
<div class="abs" style="left:8px;top:544px;width:391px;height:79px;box-sizing:border-box;border:1px solid #c6c3be;"></div>
<div id="propframe" class="abs">
 <div class="abs" style="left:0;top:0;width:390px;height:24px;background:linear-gradient(#fdfdfc,#efeeec);border-bottom:1px solid #cfccc8;box-sizing:border-box;"></div>
 <div class="abs" style="left:98px;top:0;width:1px;height:24px;background:#d2cfcb;"></div>
 <div class="abs" style="left:0;top:24px;width:390px;height:21px;background:#c8c6c4;"></div>
 <div class="abs" style="left:0;top:45px;width:390px;height:20px;background:#efeeed;"></div>
 <div class="abs" style="left:20px;top:64px;width:369px;height:1px;background:#d8d6d3;"></div>
 <div class="abs" style="left:98px;top:45px;width:1px;height:34px;background:#d8d6d3;"></div>
</div>
<!-- scrollbar -->
<div class="abs" style="left:401px;top:545px;width:13px;height:77px;box-sizing:border-box;border:1px solid #c1beb9;border-radius:6.5px;background:linear-gradient(90deg,#e3e2e0,#f3f2f1);"></div>
<div class="abs" style="left:402px;top:580px;width:11px;height:29px;background:linear-gradient(90deg,#d3d2d0,#e2e1df);border-radius:0 0 5.500px 5.500px;"></div>
<div class="abs" style="left:401px;top:556px;width:13px;height:34px;box-sizing:border-box;border:1px solid #a9a6a1;border-radius:6px;background:linear-gradient(90deg,#fdfdfd,#e9e8e6);"></div>
<div class="abs" style="left:405px;top:570px;width:4px;height:1px;background:#8d8a86;box-shadow:0 2px #8d8a86,0 4px #8d8a86;"></div>
<svg class="abs" style="left:400px;top:544px" width="14" height="78"><path d="M4.5 8.5 L7 5.5 L9.5 8.5Z M4.5 69.5 L7 72.5 L9.5 69.5Z" fill="#55534f"/></svg>
<!-- bottom tabs -->
<svg class="abs" style="left:4px;top:621px" width="110" height="34" viewBox="0 0 110 34">
 <path d="M0.5 33.5 H410" stroke="#bdb9b3" fill="none"/>
 <path d="M52 3 L59.5 27 Q61 31.5 66 31.5 H83 Q87.5 31.5 89 27 L96.5 3" fill="#eceae8" stroke="#8f8c87" stroke-width="1"/>
 <path d="M2 2.5 L10.5 27 Q12 31.5 17 31.5 H36 Q40.5 31.5 42 27 L50.5 2.5" fill="#ffffff" stroke="#8f8c87" stroke-width="1"/>
</svg>

<!--/LEFTPANEL-->
<div id="viewport" class="abs">
<!--SCENE-->
<svg class="abs" style="left:0;top:0" width="773" height="509" viewBox="424 114 773 509">
<defs>
 <linearGradient id="gHole" x1="0" y1="0" x2="1" y2="0"><stop offset="0" stop-color="#3c3c3c"/><stop offset=".25" stop-color="#8a8a8a"/><stop offset=".5" stop-color="#9c9c9c"/><stop offset=".75" stop-color="#868686"/><stop offset="1" stop-color="#444"/></linearGradient>
</defs>
<g stroke="#101010" stroke-width="1.800" stroke-linejoin="round" stroke-linecap="round">
 <!-- second object -->
 <path d="M587.500 520 L761 572.500 L761.500 640 L485.300 640Z" fill="#999999"/>
 <path d="M761 572.500 L761.800 640 L704 640Z" fill="#424242"/>
 <ellipse cx="628" cy="600.300" rx="40" ry="23.700" fill="url(#gHole)"/>
 <!-- base: top face -->
 <path d="M685 315.200 L1032.200 421.500 L940 529 L592 424Z" fill="#999999"/>
 <!-- base: front face -->
 <path d="M592 424 L940 529 L941 576.200 L594.300 470.500Z" fill="#999999"/>
 <!-- base: right face -->
 <path d="M940 529 L1032.200 421.500 L1033.800 469 L941 576.200Z" fill="#424242"/>
 <!-- wall: right (dark) face -->
 <path d="M795.400 331.200 L887.400 223.200 L893.200 379.200 L800.200 487.500Z" fill="#424242"/>
 <!-- wall: front face -->
 <path d="M743.200 316.400 L795.400 331.200 L800.200 487.500 L748.300 471.100Z" fill="#999999"/>
 <!-- wall: top face -->
 <path d="M743.200 316.400 L836.100 208.200 L887.400 223.200 L795.400 331.200Z" fill="#999999"/>
 <!-- join line hidden: wall front bottom merges with base -->
</g>
<path d="M748.300 471.100 L800.200 487.500" stroke="#999999" stroke-width="3"/>
<path d="M893.200 379.200 L800.200 487.500" stroke="#22b422" stroke-width="1.800" stroke-linecap="round"/>
<!-- axis cross -->
<g font-family="Liberation Sans, sans-serif" font-size="9" fill="#111">
 <text x="1172.500" y="580.500">Z</text><text x="1181" y="588.500">Y</text><text x="1190.500" y="603">X</text>
</g>
<path d="M1171.200 597.500 V582" stroke="#1a1a9a" stroke-width="2.300"/>
<path d="M1169.200 585.500 H1173.200" stroke="#1a1a9a" stroke-width="1.600"/>
<path d="M1171.500 597.500 L1178 591" stroke="#1f9a2a" stroke-width="1.500"/>
<path d="M1179.500 589.500 L1178.300 593 L1176 590.700Z" fill="#1f9a2a"/>
<path d="M1171.500 597.500 L1187 602" stroke="#a02020" stroke-width="1.600"/>
<path d="M1189.500 602.800 L1185.500 603.500 L1186.500 600Z" fill="#a02020"/>
</svg>
<!--/SCENE-->
</div>
<!--BOTTOM-->
<!-- mdi tabs -->
<div class="abs" style="left:424px;top:623px;width:109px;height:29px;box-sizing:border-box;background:linear-gradient(#e9e8e6,#f1f0ef);border:1px solid #c4c1bc;border-top:none;border-radius:0 0 4px 4px;"></div>
<div class="abs" style="left:533px;top:623px;width:169px;height:32px;box-sizing:border-box;background:#fff;border:1px solid #c9c6c1;border-top:none;border-radius:0 0 5px 5px;box-shadow:0 1px 1px rgba(0,0,0,.08);"></div>
<svg class="abs" style="left:505px;top:628px" width="200" height="22" viewBox="505 628 200 22">
 <g id="xbtn"><path d="M510.800 634.800 L519.700 643.700 M519.700 634.800 L510.800 643.700" stroke="#605e5a" stroke-width="3.200" stroke-linecap="butt"/></g>
 <path d="M679.300 635.300 L688.700 644.700 M688.700 635.300 L679.300 644.700" stroke="#605e5a" stroke-width="3.200"/>
 <!-- freecad doc icon -->
 <path d="M540.300 631.700 H547 V634.800 H543.800 V643.500 H540.300Z" fill="#e2411f"/>
 <path d="M540.300 631.700 H542.400 V643.500 H540.300Z" fill="#c3261a"/>
 <circle cx="548.500" cy="639.800" r="3.900" fill="#1b3cb4"/>
 <g stroke="#1b3cb4" stroke-width="2"><path d="M548.500 634.500 V645.100 M543.200 639.800 H553.800 M544.750 636.050 L552.250 643.550 M552.250 636.050 L544.750 643.550"/></g>
 <circle cx="548.500" cy="639.800" r="1.800" fill="#fff"/>
</svg>
<!-- status bar -->
<div class="abs" style="left:3px;top:655px;width:1194px;height:1px;background:#dcdad7;"></div>
<div class="abs" style="left:3px;top:656px;width:1194px;height:1px;background:#fbfbfa;"></div>
<svg class="abs" style="left:1183px;top:671px" width="14" height="14"><g fill="#ffffff"><rect x="11.4" y="1.3" width="1.400" height="1.400"/><rect x="8.5" y="4.3" width="1.400" height="1.400"/><rect x="11.4" y="4.3" width="1.400" height="1.400"/><rect x="5.5" y="7.3" width="1.400" height="1.400"/><rect x="8.5" y="7.3" width="1.400" height="1.400"/><rect x="11.4" y="7.3" width="1.400" height="1.400"/><rect x="2.5" y="10.3" width="1.400" height="1.400"/><rect x="5.5" y="10.3" width="1.400" height="1.400"/><rect x="8.5" y="10.3" width="1.400" height="1.400"/><rect x="11.4" y="10.3" width="1.400" height="1.400"/></g></svg>
<div class="abs" style="left:3px;top:685px;width:1195px;height:2px;background:linear-gradient(#8f8d89,#55534f);"></div>
<div class="abs" style="left:1197px;top:35px;width:1px;height:651px;background:#8f8d89;"></div>
<!--/BOTTOM-->
<!--TEXTS-->
<div class="t" style="left:78.75px;top:12.90px;transform:scaleX(1.0453);font-weight:bold;color:#dfdbd2;">FreeCAD</div>
<div class="t" style="left:6.55px;top:118.85px;transform:scaleX(1.0293);">Combo View</div>
<div class="t" style="left:12.22px;top:145.15px;transform:scaleX(1.0777);z-index:3;">Project</div>
<div class="t" style="left:75.30px;top:146.15px;transform:scaleX(0.9641);">Tasks</div>
<div class="t" style="left:10.72px;top:175.15px;transform:scaleX(1.0772);">Labels &amp; Attributes</div>
<div class="t" style="left:10.30px;top:196.45px;transform:scaleX(1.0960);">Application</div>
<div class="t" style="left:51.70px;top:215.65px;transform:scaleX(1.0915);font-weight:bold;color:#2b2b2b;">tutorial-exp</div>
<div class="t" style="left:71.60px;top:234.15px;transform:scaleX(1.0456);">union-90</div>
<div class="t" style="left:71.49px;top:252.75px;transform:scaleX(1.1127);">Fillet</div>
<div class="t" style="left:90.90px;top:271.55px;transform:scaleX(0.9950);color:#bdbdbd;">Cubo-1</div>
<div class="t" style="left:71.10px;top:290.35px;transform:scaleX(1.0533);">Chamfer</div>
<div class="t" style="left:90.90px;top:309.35px;transform:scaleX(1.0058);color:#bdbdbd;">Cubo-2</div>
<div class="t" style="left:71.40px;top:328.15px;transform:scaleX(1.0355);color:#bdbdbd;">Chamfer001</div>
<div class="t" style="left:90.40px;top:346.95px;transform:scaleX(1.0275);">Cubo-3</div>
<div class="t" style="left:71.13px;top:365.75px;transform:scaleX(1.0704);">Fillet001</div>
<div class="t" style="left:71.20px;top:384.55px;transform:scaleX(1.0452);font-weight:bold;color:#2b2b2b;">Chamfer002</div>
<div class="t" style="left:13.11px;top:549.85px;transform:scaleX(1.0903);">Property</div>
<div class="t" style="left:112.40px;top:549.85px;transform:scaleX(1.0406);">Value</div>
<div class="t" style="left:32.40px;top:572.45px;transform:scaleX(0.9471);font-weight:bold;color:#ffffff;">Base</div>
<div class="t" style="left:32.14px;top:592.75px;transform:scaleX(1.0634);">Boundin…</div>
<div class="t" style="left:111.20px;top:592.75px;transform:scaleX(1.0307);">false</div>
<div class="t" style="left:14.70px;top:630.15px;transform:scaleX(1.0361);">View</div>
<div class="t" style="left:62.25px;top:629.45px;transform:scaleX(1.0456);">Data</div>
<div class="t" style="left:432.00px;top:630.85px;transform:scaleX(1.0492);">Start page</div>
<div class="t" style="left:564.00px;top:631.15px;transform:scaleX(1.0770);">tutorial-exp : 1*</div>
<div class="t" style="left:10.25px;top:661.75px;transform:scaleX(1.0468);">Preselected: tutorial_exp.Fusion.Edge10 (11.363542,25.000000,0.000000)</div>
<div class="t" style="left:1054.90px;top:662.75px;transform:scaleX(1.0242);">39.30 x 25.87 mm</div>
<div class="abs" style="left:0;top:0;width:1200px;height:622px;overflow:hidden;pointer-events:none;">
<div class="t" style="left:32.00px;top:611.75px;transform:scaleX(1.0795);">Control</div>
<div class="t" style="left:111.20px;top:611.75px;transform:scaleX(1.0307);">false</div>
</div>
<!--/TEXTS-->
</body>
</html>
